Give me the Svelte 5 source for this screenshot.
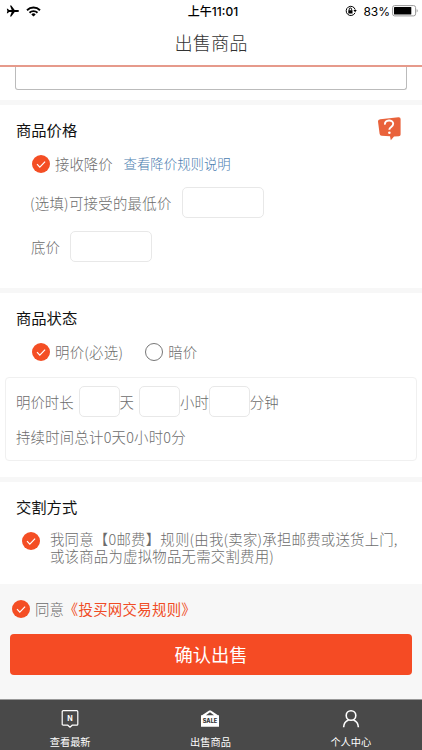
<script lang="ts">
	type Tab = {
		id: string;
		label: string;
	};

	const tabs: Tab[] = [
		{ id: 'latest', label: '查看最新' },
		{ id: 'sell', label: '出售商品' },
		{ id: 'profile', label: '个人中心' },
	];

	let acceptDiscount = $state(true);
	let openPrice = $state(true);
	let freeShipping = $state(true);
	let agreed = $state(true);
	let lowestPrice = $state('');
	let basePrice = $state('');
	let days = $state('');
	let hours = $state('');
	let minutes = $state('');
</script>

{#snippet check(checked: boolean, toggle: () => void, label: string)}
	<button class="check" class:check--on={checked} onclick={toggle} aria-label={label}>
		{#if checked}
			<svg width="18" height="18" viewBox="0 0 18 18">
				<path d="M5 9.2l2.8 2.9 5.3-5.4" fill="none" stroke="#fff" stroke-width="1.2" />
			</svg>
		{/if}
	</button>
{/snippet}

<div class="page">
	<div class="status">
		<div class="status__left">
			<svg width="14" height="12" viewBox="0 0 14 12">
				<path
					d="M13 6c0-.6-.7-.9-1.5-.9H8.7L5.3.6H4l1.7 4.5H3L1.8 3.7H.8L1.4 6 .8 8.3h1L3 6.9h2.7L4 11.4h1.3l3.4-4.5h2.8c.8 0 1.5-.3 1.5-.9z"
					fill="#000"
				/>
			</svg>
			<svg width="15" height="11" viewBox="0 0 15 11">
				<g fill="none" stroke="#000" stroke-width="1.9">
					<path d="M1 4.2a9.3 9.3 0 0 1 13 0" />
					<path d="M3.5 6.7a5.8 5.8 0 0 1 8 0" />
				</g>
				<path d="M7.5 10.6L5.3 8.4a3.2 3.2 0 0 1 4.4 0z" fill="#000" />
			</svg>
		</div>
		<div class="status__time">上午11:01</div>
		<div class="status__right">
			<svg width="12" height="12" viewBox="0 0 12 12">
				<g fill="none" stroke="#000" stroke-width="1">
					<path d="M10 7.8A4.6 4.6 0 1 1 10.2 4.6" />
					<path d="M4.2 5.5V4.2a1.2 1.2 0 0 1 2.4 0v1.3" />
				</g>
				<path d="M3.3 5.2h4.2v3.2H3.3zM8.4 5h3.4l-1.7 2.2z" fill="#000" />
			</svg>
			<span class="status__percent">83%</span>
			<svg width="26" height="12" viewBox="0 0 26 12">
				<rect x=".6" y=".6" width="23" height="10.3" rx="2" fill="#fff" stroke="#999" />
				<rect x="2" y="2" width="17.3" height="7.5" rx=".6" fill="#000" />
				<path d="M24.7 4v3.6q1-.6 1-1.8t-1-1.8z" fill="#999" />
			</svg>
		</div>
	</div>
	<h1 class="title">出售商品</h1>

	<main>
		<div class="intro">
			<div class="intro__box"></div>
		</div>

		<section class="section section--price">
			<div class="section__head">
				<h2>商品价格</h2>
				<svg width="26" height="26" viewBox="0 0 26 26">
					<path
						d="M3.2 3.2L21.4 1.2Q23.6 1 23.6 3V18.4Q23.6 20 21.8 20.2L17 20.4 13.8 24.2 13 20.3 4.6 19.7Q2.9 19.6 2.6 17.8L1 5.4Q.8 3.4 3.2 3.2z"
						fill="#e9623b"
					/>
					<path
						d="M7.9 8.6c-.2-5.2 8.3-5.4 8.3-.8 0 3.2-3.9 3-3.9 6"
						fill="none"
						stroke="#fff"
						stroke-width="1.9"
					/>
					<circle cx="12.4" cy="16.8" r="1.3" fill="#fff" />
				</svg>
			</div>
			<div class="line line--options">
				{@render check(acceptDiscount, () => (acceptDiscount = !acceptDiscount), '接收降价')}
				<span>接收降价</span>
				<a class="rules" href="#rules">查看降价规则说明</a>
			</div>
			<label class="line line--field">
				<span class="lowest">(选填)可接受的最低价</span>
				<input class="price" bind:value={lowestPrice} />
			</label>
			<label class="line line--field">
				<span class="base">底价</span>
				<input class="price" bind:value={basePrice} />
			</label>
		</section>

		<section class="section section--state">
			<div class="section__head">
				<h2>商品状态</h2>
			</div>
			<div class="line line--options">
				{@render check(openPrice, () => (openPrice = true), '明价')}
				<span class="open-label">明价(必选)</span>
				{@render check(!openPrice, () => (openPrice = false), '暗价')}
				<span>暗价</span>
			</div>
			<div class="duration">
				<div class="duration__inputs">
					<span class="duration__label">明价时长</span>
					<input bind:value={days} aria-label="天" />
					<span class="duration__day">天</span>
					<input bind:value={hours} aria-label="小时" />
					<span>小时</span>
					<input bind:value={minutes} aria-label="分钟" />
					<span>分钟</span>
				</div>
				<p class="duration__total">
					持续时间总计{days || 0}天{hours || 0}小时{minutes || 0}分
				</p>
			</div>
		</section>

		<section class="section section--delivery">
			<div class="section__head">
				<h2>交割方式</h2>
			</div>
			<div class="delivery">
				{@render check(freeShipping, () => (freeShipping = !freeShipping), '0邮费')}
				<p>
					我同意【0邮费】规则(由我(卖家)承担邮费或送货上门,<br />
					或该商品为虚拟物品无需交割费用)
				</p>
			</div>
		</section>

		<div class="confirm">
			<div class="confirm__agree">
				{@render check(agreed, () => (agreed = !agreed), '同意')}
				<span>同意</span>
				<a href="#terms">《投买网交易规则》</a>
			</div>
			<button class="submit">确认出售</button>
		</div>
	</main>

	<nav class="tabs">
		{#each tabs as tab (tab.id)}
			<a class="tab" href={`#${tab.id}`}>
				<svg width="20" height="20" viewBox="0 0 20 20">
					{#if tab.id === 'latest'}
						<path
							d="M3.2 1.7h13.6q1 0 1 1v12.5q0 1-1 1h-4.6L10 18.2l-2.2-2H3.2q-1 0-1-1V2.7q0-1 1-1z"
							fill="none"
							stroke="#fff"
							stroke-width="1.2"
						/>
						<text x="10" y="12" text-anchor="middle" font-size="8" font-weight="700" fill="#fff">N</text>
					{:else if tab.id === 'sell'}
						<path d="M1 6.3h1L9.2 1.6h1.6L18 6.3h1v11.5H1zM6 6.2h8l-4-3z" fill="#fff" fill-rule="evenodd" />
						<text
							x="10"
							y="14.2"
							text-anchor="middle"
							font-family="Inter"
							font-size="5.6"
							font-weight="800"
							fill="#333">SALE</text
						>
					{:else}
						<g fill="none" stroke="#fff" stroke-width="1.6">
							<circle cx="10" cy="6.5" r="4.8" />
							<path d="M2.6 18.3c.2-4 2.1-6.3 5-7.3M17.4 18.3c-.2-4-2.1-6.3-5-7.3" />
						</g>
					{/if}
				</svg>
				<span>{tab.label}</span>
			</a>
		{/each}
	</nav>
</div>

<style>
	:global(body) {
		background-color: #f7f7f7;
	}

	.page {
		display: flex;
		flex-direction: column;
		box-sizing: border-box;
		width: 422px;
		height: 750px;
		overflow: hidden;
		color: #6c6c6c;
		font-weight: 300;
		font-size: 14.4px;
		font-family: 'Noto Sans CJK SC', sans-serif;
		white-space: nowrap;
	}

	h1,
	h2,
	p {
		margin: 0;
		font-weight: 400;
	}

	a {
		text-decoration: none;
	}

	input {
		box-sizing: border-box;
		border: 1px solid #e8e8e8;
		border-radius: 5px;
		background-color: #fff;
		padding: 0 6px;
		width: 41px;
		height: 31px;
		color: inherit;
		font: inherit;
	}

	.status {
		display: grid;
		grid-template-columns: 1fr auto 1fr;
		align-items: center;
		background-color: #fff;
		padding: 0 4px 0 6px;
		height: 22px;
		color: #000;
		font-weight: 500;
		font-size: 12px;
	}

	.status__left,
	.status__right {
		display: flex;
		align-items: center;
	}

	.status__left {
		gap: 6px;
	}

	.status__time {
		padding: 0 0 2px 2px;
		font-family: Inter, 'Noto Sans CJK SC', sans-serif;
	}

	.status__right {
		justify-content: flex-end;
	}

	.status__percent {
		margin: 0 2px 0 6px;
		font-weight: 400;
		font-family: Inter, sans-serif;
	}

	.title {
		border-bottom: 2px solid #e69a8b;
		background-color: #fff;
		height: 43px;
		color: #333;
		font-weight: 300;
		font-size: 18.2px;
		line-height: 41px;
		text-align: center;
	}

	main {
		flex: 1;
	}

	.intro {
		background-color: #fff;
		padding: 0 15px;
		height: 33px;
	}

	.intro__box {
		box-sizing: border-box;
		border: 1px solid #bbb;
		border-top: 0;
		border-radius: 0 0 3px 3px;
		height: 23px;
	}

	.section {
		box-sizing: border-box;
		margin-top: 5px;
		background-color: #fff;
	}

	.section--price {
		height: 183px;
	}

	.section--state {
		height: 184px;
	}

	.section--delivery {
		height: 102px;
	}

	.section__head {
		display: flex;
		justify-content: space-between;
		align-items: center;
		box-sizing: border-box;
		padding: 0 19px 2px 16px;
		height: 49px;
	}

	.section__head h2 {
		color: #111;
		font-size: 15.3px;
		line-height: 22px;
	}

	.line {
		display: flex;
		align-items: center;
		padding-left: 30px;
	}

	.line--options {
		padding-left: 32px;
		height: 20px;
	}

	.line--options > span,
	.line--options > a {
		padding-bottom: 2px;
	}

	.line--field {
		margin-top: 13px;
		height: 31px;
	}

	.lowest {
		letter-spacing: 0.27px;
	}

	.base {
		padding-left: 1px;
	}

	.check {
		display: block;
		flex: none;
		box-sizing: border-box;
		margin-right: 5px;
		border: 1px solid #777;
		border-radius: 50%;
		background-color: #fff;
		padding: 0;
		width: 18px;
		height: 18px;
	}

	.check--on {
		border: 0;
		background-color: #f44e24;
	}

	.check svg {
		display: block;
	}

	.rules {
		margin-left: 11px;
		color: #4c7eb0;
		font-size: 13.4px;
	}

	.price {
		margin-left: 10px;
		width: 82px;
	}

	.open-label {
		margin-right: 22px;
		letter-spacing: 0.27px;
	}

	.duration {
		box-sizing: border-box;
		margin: 15px 5px 0;
		border: 1px solid #f0f0f0;
		border-radius: 4px;
		padding: 8px 0 0 10px;
		height: 84px;
	}

	.duration__inputs {
		display: flex;
		align-items: center;
		height: 31px;
	}

	.duration__label {
		margin-right: 5px;
	}

	.duration__day {
		margin-right: 5px;
	}

	.duration__total {
		margin-top: 9px;
		font-weight: 300;
		line-height: 22px;
		letter-spacing: 0.22px;
	}

	.delivery {
		display: flex;
		padding-left: 22px;
	}

	.delivery .check {
		margin: 1px 10px 0 0;
	}

	.delivery p {
		margin-top: -1px;
		font-weight: 300;
		line-height: 17px;
		letter-spacing: 0.23px;
	}

	.confirm {
		padding: 15px 10px 0;
	}

	.confirm__agree {
		display: flex;
		align-items: center;
		padding-left: 2px;
		height: 20px;
	}

	.confirm__agree > span,
	.confirm__agree > a {
		padding-bottom: 2px;
	}

	.confirm__agree a {
		color: #f04d26;
		font-weight: 400;
		letter-spacing: 0.3px;
	}

	.submit {
		display: block;
		margin-top: 15px;
		border: 0;
		border-radius: 4px;
		background-color: #f54b24;
		padding: 0 0 2px;
		width: 402px;
		height: 41px;
		color: #fff;
		font-size: 18.3px;
		font-family: inherit;
	}

	.tabs {
		display: grid;
		grid-template-columns: repeat(3, 1fr);
		box-sizing: border-box;
		border-top: 1px solid #999;
		background-color: #494949;
		padding-right: 1px;
		height: 51px;
	}

	.tab {
		display: flex;
		flex-direction: column;
		align-items: center;
		padding-top: 9px;
		color: #fff;
		font-weight: 400;
		font-size: 10.2px;
		line-height: 15px;
	}

	.tab span {
		margin-top: 5px;
	}
</style>
